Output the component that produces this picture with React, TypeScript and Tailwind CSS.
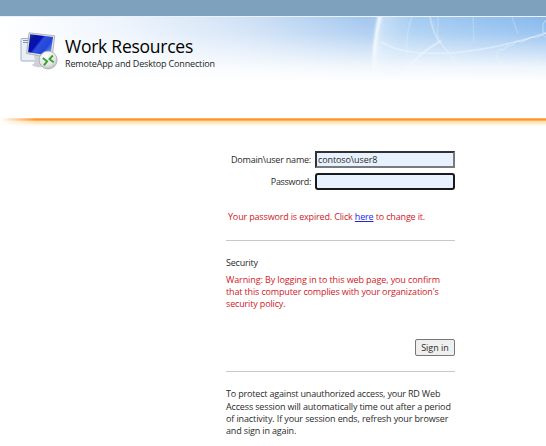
import React from "react";

function DesktopIcon() {
  return (
    <svg className="mt-px h-[38px] w-[38px] shrink-0" viewBox="0 0 38 38" fill="none">
      <defs>
        <linearGradient id="screen" x1="8" y1="3" x2="31" y2="21" gradientUnits="userSpaceOnUse">
          <stop stopColor="#2740b0" />
          <stop offset=".2" stopColor="#0a1599" />
          <stop offset=".42" stopColor="#0510b8" />
          <stop offset=".5" stopColor="#2c50dc" />
          <stop offset=".75" stopColor="#2444dc" />
          <stop offset="1" stopColor="#6f9cf4" />
        </linearGradient>
        <radialGradient id="badge" cx=".4" cy=".3" r=".75">
          <stop stopColor="#ffffff" />
          <stop offset=".65" stopColor="#e4e6e6" />
          <stop offset="1" stopColor="#b4b8ba" />
        </radialGradient>
      </defs>
      <rect x="1" y="6.5" width="16" height="22.5" rx="1" fill="#e9eff7" stroke="#a3afc2" />
      <path d="M3 8.5h7M3 10.5h6" stroke="#8094b4" />
      <path d="M14 23l10 1-2 11c-5 .5-9-.5-10-2 1-1 3-2 3-4z" fill="#cfd1d4" />
      <path d="M9 .8L34.8 3.8 32 26 6.5 21.5z" fill="#e0e1e3" stroke="#9d9fa5" strokeWidth=".7" />
      <path d="M10.2 2.3L33 5 30.4 23.7 8.1 20.2z" fill="url(#screen)" />
      <circle cx="28.1" cy="28" r="9" fill="url(#badge)" stroke="#a7aaad" strokeWidth=".8" />
      <path d="M22.8 26l4.3 3.3-3.2 4M32.8 23.5l-3.3 3.7 4.2 3" stroke="#35a22d" strokeWidth="1.9" />
    </svg>
  );
}

function Globe() {
  return (
    <svg className="absolute right-0 top-0 h-[66px] w-[180px]" viewBox="0 0 180 66" fill="none">
      <defs>
        <linearGradient id="fadeGradient" x1="0" y1="0" x2="0" y2="1">
          <stop stopColor="#fff" />
          <stop offset=".5" stopColor="#fff" stopOpacity=".75" />
          <stop offset="1" stopColor="#fff" stopOpacity="0" />
        </linearGradient>
        <mask id="fade"><rect width="180" height="66" fill="url(#fadeGradient)" /></mask>
        <linearGradient id="rim" x1="5" y1="0" x2="50" y2="0" gradientUnits="userSpaceOnUse">
          <stop stopColor="#fff" stopOpacity=".7" />
          <stop offset=".3" stopColor="#f4fbff" stopOpacity=".38" />
          <stop offset="1" stopColor="#e4f6ff" stopOpacity="0" />
        </linearGradient>
        <filter id="soft" x="-50%" y="-50%" width="200%" height="200%"><feGaussianBlur stdDeviation=".65" /></filter>
        <filter id="softer" x="-100%" y="-20%" width="300%" height="140%"><feGaussianBlur stdDeviation="1.2" /></filter>
      </defs>
      <g mask="url(#fade)" stroke="#fff">
        <path d="M13 0Q5 30 6 66H54Q44 30 54 0z" fill="url(#rim)" stroke="none" />
        <path d="M14 -3Q7 26 8 66" strokeWidth="4" strokeOpacity=".75" filter="url(#softer)" />
        <path d="M15 25C35 37 62 37 86 36C120 33 150 26 180 16" strokeWidth="1.5" strokeOpacity=".5" filter="url(#soft)" />
        <path d="M64 0C67 16 71 22 77 29C84 37 91 46 96 57" strokeWidth="1.8" strokeOpacity=".35" filter="url(#soft)" />
        <path d="M75 24C55 35 45 45 36 62" strokeWidth="2" strokeOpacity=".5" filter="url(#soft)" />
        <path d="M46 0C41 12 40 24 41 40M107 0L108 26M146 0L152 17M72 0V25" strokeWidth="1.2" strokeOpacity=".25" filter="url(#soft)" />
        <path d="M67 3l1 6 3 4-1 5 4 3 2 4M85 35l4 2 1 4 4 3" strokeOpacity=".2" />
        <path d="M180 3l-3 4v8l3 2M180 20l-4-2-5 3-6-1-5 3-5 2-5-1-3 4-6 1-4 4-3-1-3 4v6l4 4-1 5 7-1 8-2 7 1 5-3 7 1 6-3" strokeOpacity=".42" strokeWidth="1.1" />
      </g>
    </svg>
  );
}

function Line({ children, className = "" }: { children: React.ReactNode; className?: string }) {
  return <span className={"block whitespace-nowrap " + className}>{children}</span>;
}

export default function App() {
  return (
    <div className="h-[446px] w-[546px] overflow-hidden bg-white font-['Open_Sans','Noto_Sans',sans-serif] text-[9px] leading-[12.3px] tracking-[-0.15px] text-[#2a2a2a]">
      <div className="h-4 bg-[#7ea2bd]" />
      <header className="relative h-[102px] border-t border-[#eaf2f8]">
        <div className="absolute inset-x-0 top-0 h-[66px] bg-[linear-gradient(to_right,#fff_0%,#edf4fc_22%,#cfe1f6_45%,#a3c7ef_67%,#a3cbf2_76%,#86b8ed_100%)]" />
        <div className="absolute inset-x-0 top-0 h-[66px] bg-[linear-gradient(to_bottom,rgba(255,255,255,0)_0%,rgba(255,255,255,.18)_25%,rgba(255,255,255,.52)_50%,rgba(255,255,255,.86)_76%,#fff_98%)]" />
        <Globe />
        <div className="relative flex pl-5 pt-[14px]">
          <DesktopIcon />
          <div className="ml-[7px] text-black">
            <h1 className="mt-[3px] whitespace-nowrap text-[17.5px] leading-6 tracking-[-0.25px]">Work Resources</h1>
            <p className="whitespace-nowrap text-[9px] leading-3 tracking-[-0.16px] text-[#1c1c1c]">RemoteApp and Desktop Connection</p>
          </div>
        </div>
      </header>
      <div className="h-[8px] bg-[linear-gradient(to_bottom,#ffb45c_0px,#ffb45c_1px,#f9962e_1px,#f9962e_2px,#ffb058_2px,#ffb058_3px,#ffd99f_3px,#ffe7c3_5px,#fff_8px)] [mask-image:linear-gradient(to_right,transparent,#000_36px)]" />

      <main className="ml-[226px] w-[229px] pt-[25px]">
        <div className="flex items-center justify-end gap-1">
          <label htmlFor="user" className="whitespace-nowrap pt-[2px] tracking-[-0.21px]">Domain\user name:</label>
          <input id="user" defaultValue="contoso\user8" className="h-[17px] w-[140px] border-2 border-t-[#303236] border-l-[#303236] border-r-[#777b80] border-b-[#777b80] bg-[#e8f2fe] px-px text-[9px] tracking-[-0.1px] outline-none" />
        </div>
        <div className="mt-[5px] flex items-center justify-end gap-1">
          <label htmlFor="password" className="whitespace-nowrap pt-[2px] tracking-[-0.3px]">Password:</label>
          <input id="password" type="password" className="h-[17px] w-[140px] rounded-[3px] border-2 border-[#181a1d] bg-[#e8f2fe] outline-none" />
        </div>
        <p className="ml-[2px] mt-[21px] whitespace-nowrap tracking-[-0.16px] text-[#cf2027]">
          Your password is expired. Click <a href="#" className="text-[#2424ee] underline">here</a> to change it.
        </p>
        <hr className="mt-[17px] border-t border-[#c8c8c8]" />
        <h2 className="mt-[16px] tracking-[-0.2px]">Security</h2>
        <div className="mt-[4px] text-[#cf2027]">
          <Line className="tracking-[-0.1px]">Warning: By logging in to this web page, you confirm</Line>
          <Line>that this computer complies with your organization's</Line>
          <Line>security policy.</Line>
        </div>
        <div className="mt-[29px] flex justify-end">
          <button className="h-[17px] w-10 whitespace-nowrap rounded-[2px] border border-[#777] bg-[#efefef] text-[9px] leading-[16px] tracking-normal">Sign in</button>
        </div>
        <hr className="mt-[15px] border-t border-[#c8c8c8]" />
        <div className="mt-[16px]">
          <Line className="tracking-[-0.18px]">To protect against unauthorized access, your RD Web</Line>
          <Line>Access session will automatically time out after a period</Line>
          <Line className="tracking-[-0.12px]">of inactivity. If your session ends, refresh your browser</Line>
          <Line>and sign in again.</Line>
        </div>
      </main>
    </div>
  );
}
